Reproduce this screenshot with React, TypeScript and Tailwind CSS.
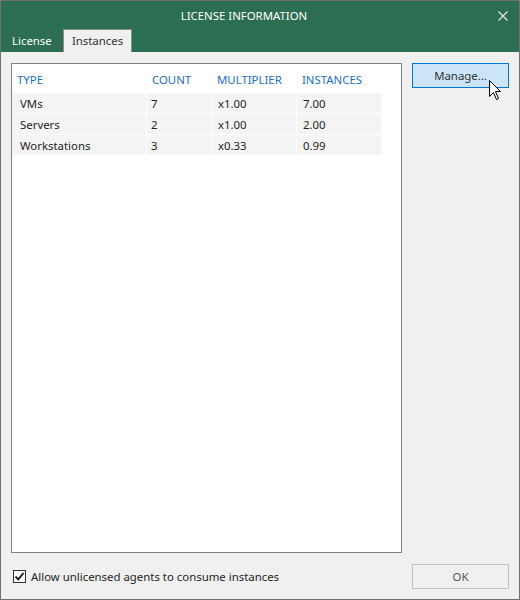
import React from 'react';

const rows = [
  { type: 'VMs', count: '7', mult: 'x1.00', inst: '7.00' },
  { type: 'Servers', count: '2', mult: 'x1.00', inst: '2.00' },
  { type: 'Workstations', count: '3', mult: 'x0.33', inst: '0.99' },
];

const cols = 'grid grid-cols-[134px_64px_84px_84px] gap-x-px';

function Cursor() {
  return (
    <svg className="absolute left-[77px] top-[17px]" width="13" height="20" viewBox="0 0 13 20">
      <path d="M0.5 0.5 L0.5 16.5 L4.5 12.5 L7.5 19.5 L9.5 18.5 L6.5 11.5 L11.5 11.5 Z" fill="#fff" stroke="#000" strokeWidth="1" strokeLinejoin="miter" />
    </svg>
  );
}

export default function App() {
  return (
    <div className="w-[520px] h-[600px] border border-[#707070] bg-[#f0f0f0] flex flex-col text-[11.4px] text-[#1e1e1e] font-['Noto_Sans',sans-serif] overflow-hidden">
      {/* Title bar + tabs */}
      <div className="bg-[#2b6e51] flex flex-col">
        <div className="h-[28px] relative flex items-center justify-center pr-[32px] pt-[1px]">
          <span className="text-white">LICENSE INFORMATION</span>
          <svg className="absolute right-[11px] top-[10px]" width="10" height="10" viewBox="0 0 10 10">
            <path d="M0.5 0.5 L9.5 9.5 M9.5 0.5 L0.5 9.5" stroke="#e8efe9" strokeWidth="1.1" />
          </svg>
        </div>
        <div className="h-[23px] flex items-end">
          <div className="w-[62px] h-[23px] pl-[11px] flex items-center text-white">License</div>
          <div className="w-[69px] h-[23px] border border-b-0 border-[#8c8c8c] bg-[#f0f0f0] flex items-center justify-center text-[#333]">
            Instances
          </div>
        </div>
      </div>

      {/* Body */}
      <div className="flex-1 flex flex-col px-[10px] pt-[11px] pb-[10px] gap-[11px]">
        <div className="flex gap-[10px]">
          <div className="w-[391px] h-[490px] border border-[#828282] bg-white">
            <div className={`${cols} h-[29px] items-center pt-[2px] text-[#1a6fc4]`}>
              <span className="pl-[5px]">TYPE</span>
              <span className="pl-[5px]">COUNT</span>
              <span className="pl-[5px]">MULTIPLIER</span>
              <span className="pl-[5px]">INSTANCES</span>
            </div>
            <div className="flex flex-col gap-px">
              {rows.map(r => (
                <div key={r.type} className={`${cols} h-[20px]`}>
                  <span className="bg-[#f4f4f4] pl-[8px] pt-[2px] flex items-center">{r.type}</span>
                  <span className="bg-[#f4f4f4] pl-[4px] pt-[2px] flex items-center">{r.count}</span>
                  <span className="bg-[#f4f4f4] pl-[6px] pt-[2px] flex items-center">{r.mult}</span>
                  <span className="bg-[#f4f4f4] pl-[6px] pt-[2px] flex items-center">{r.inst}</span>
                </div>
              ))}
            </div>
          </div>
          <div className="relative">
            <button className="w-[97px] h-[25px] border border-[#0078d7] bg-[#cce4f7] text-[#333] flex items-center justify-center">
              Manage...
            </button>
            <Cursor />
          </div>
        </div>

        <div className="flex items-center justify-between">
          <label className="flex items-center gap-[5px] pl-[2px]">
            <span className="w-[13px] h-[13px] border border-[#333] bg-white flex items-center justify-center">
              <svg width="11" height="11" viewBox="0 0 11 11">
                <path d="M1.5 5.5 L4.2 8.3 L9.5 2" fill="none" stroke="#111" strokeWidth="1.8" />
              </svg>
            </span>
            <span>Allow unlicensed agents to consume instances</span>
          </label>
          <button className="w-[97px] h-[25px] border border-[#c2c2c2] bg-[#f0f0f0] text-[#555] flex items-center justify-center">
            OK
          </button>
        </div>
      </div>
    </div>
  );
}
